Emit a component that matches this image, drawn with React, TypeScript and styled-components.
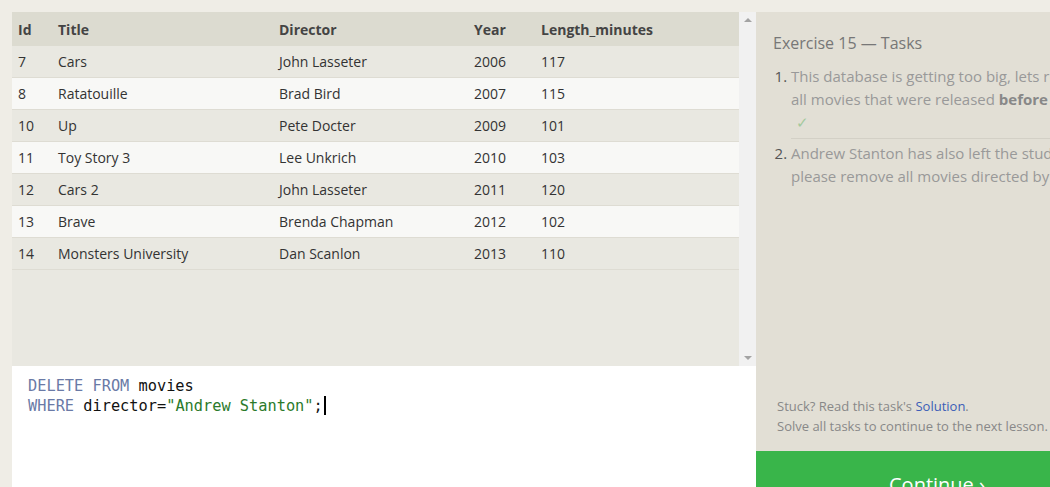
import styled, { createGlobalStyle } from 'styled-components'

const Global = createGlobalStyle`
  html, body {
    margin: 0;
    padding: 0;
    background: #efede6;
    overflow: hidden;
  }
  body {
    font-family: "Open Sans", "Noto Sans", sans-serif;
  }
`;

const Page = styled.div`
  height: 487px;
  padding: 12px 0 0 12px;
  box-sizing: border-box;
  display: flex;
  overflow: hidden;
`;

const LeftColumn = styled.div`
  width: 744px;
  flex-shrink: 0;
  display: flex;
  flex-direction: column;
`;

const TableArea = styled.div`
  height: 354px;
  display: flex;
  background: #e9e8e1;
`;

const TableWrap = styled.div`
  flex: 1;
`;

const Table = styled.table`
  width: 100%;
  border-collapse: collapse;
  font-size: 14px;
  color: #333;
`;

const HeadCell = styled.th<{ w?: number }>`
  text-align: left;
  font-weight: 700;
  color: #444;
  background: #dcdbd0;
  height: 34px;
  padding: 0 6px;
  width: ${(p) => (p.w ? `${p.w - 12}px` : 'auto')};
`;

const Row = styled.tr<{ even?: boolean }>`
  background: ${(p) => (p.even ? '#f8f8f6' : '#e9e8e1')};
  border-bottom: 1px solid #dedcd3;
`;

const Cell = styled.td`
  height: 31px;
  padding: 0 6px;
`;

const Scrollbar = styled.div`
  width: 17px;
  background: #f1f1f1;
  display: flex;
  flex-direction: column;
  justify-content: space-between;
  align-items: center;
  padding: 6px 0;
  box-sizing: border-box;
`;

const Arrow = styled.div<{ down?: boolean }>`
  width: 0;
  height: 0;
  border-left: 4px solid transparent;
  border-right: 4px solid transparent;
  ${(p) => (p.down ? 'border-top: 4px solid #a3a3a3;' : 'border-bottom: 4px solid #a3a3a3;')}
`;

const Editor = styled.div`
  flex: 1;
  background: #fff;
  padding: 10px 16px;
  font-family: "DejaVu Sans Mono", "Liberation Mono", monospace;
  font-size: 15.3px;
  line-height: 20px;
  color: #111;
`;

const Keyword = styled.span`
  color: #6a7aa6;
`;

const Str = styled.span`
  color: #2b7a2b;
`;

const Caret = styled.span`
  display: inline-block;
  width: 2px;
  height: 19px;
  background: #000;
  vertical-align: -4px;
  margin-left: 1px;
`;

const Panel = styled.div`
  width: 340px;
  flex-shrink: 0;
  height: 499px;
  background: #e2dfd5;
  display: flex;
  flex-direction: column;
`;

const PanelBody = styled.div`
  flex: 1;
  padding: 20px 17px 0 17px;
`;

const PanelTitle = styled.h2`
  margin: 0;
  font-size: 16px;
  font-weight: 400;
  line-height: 22px;
  color: #777;
`;

const TaskList = styled.ol`
  margin: 11px 0 0 0;
  padding-left: 18px;
  width: 320px;
`;

const Task = styled.li<{ last?: boolean }>`
  font-size: 15px;
  line-height: 23px;
  color: #999;
  padding-bottom: ${(p) => (p.last ? '0' : '4px')};
  margin-bottom: 3px;
  border-bottom: ${(p) => (p.last ? 'none' : '1px solid #d3d0c6')};
  &::marker {
    color: #555;
  }
  & b {
    color: #888;
  }
`;

const Check = styled.div`
  color: #a4c99d;
  font-size: 15px;
  line-height: 23px;
  padding-left: 5px;
`;

const Hint = styled.div`
  padding: 0 21px 15px 21px;
  font-size: 13px;
  line-height: 20px;
  color: #888;
  white-space: nowrap;
`;

const Link = styled.a`
  color: #3b5db7;
  text-decoration: none;
`;

const ContinueButton = styled.div`
  height: 60px;
  background: #39b54a;
  color: #fff;
  font-size: 20px;
  line-height: 28px;
  padding: 20px 0 0 133px;
  box-sizing: border-box;
`;

const rows = [
  [7, 'Cars', 'John Lasseter', 2006, 117],
  [8, 'Ratatouille', 'Brad Bird', 2007, 115],
  [10, 'Up', 'Pete Docter', 2009, 101],
  [11, 'Toy Story 3', 'Lee Unkrich', 2010, 103],
  [12, 'Cars 2', 'John Lasseter', 2011, 120],
  [13, 'Brave', 'Brenda Chapman', 2012, 102],
  [14, 'Monsters University', 'Dan Scanlon', 2013, 110],
]

export default function App() {
  return (
    <>
      <Global />
      <Page>
        <LeftColumn>
          <TableArea>
            <TableWrap>
              <Table>
                <thead>
                  <tr>
                    <HeadCell w={40}>Id</HeadCell>
                    <HeadCell w={221}>Title</HeadCell>
                    <HeadCell w={195}>Director</HeadCell>
                    <HeadCell w={67}>Year</HeadCell>
                    <HeadCell>Length_minutes</HeadCell>
                  </tr>
                </thead>
                <tbody>
                  {rows.map((r, i) => (
                    <Row key={r[0]} even={i % 2 === 1}>
                      {r.map((v, j) => <Cell key={j}>{v}</Cell>)}
                    </Row>
                  ))}
                </tbody>
              </Table>
            </TableWrap>
            <Scrollbar>
              <Arrow />
              <Arrow down />
            </Scrollbar>
          </TableArea>
          <Editor>
            <div><Keyword>DELETE FROM</Keyword> movies</div>
            <div><Keyword>WHERE</Keyword> director=<Str>"Andrew Stanton"</Str>;<Caret /></div>
          </Editor>
        </LeftColumn>
        <Panel>
          <PanelBody>
            <PanelTitle>Exercise 15 — Tasks</PanelTitle>
            <TaskList>
              <Task>
                This database is getting too big, lets remove all movies that were released <b>before</b> 2005.
                <Check>✓</Check>
              </Task>
              <Task last>
                Andrew Stanton has also left the studio, so please remove all movies directed by him.
              </Task>
            </TaskList>
          </PanelBody>
          <Hint>
            Stuck? Read this task's <Link>Solution</Link>.<br />
            Solve all tasks to continue to the next lesson.
          </Hint>
          <ContinueButton>Continue ›</ContinueButton>
        </Panel>
      </Page>
    </>
  )
}
